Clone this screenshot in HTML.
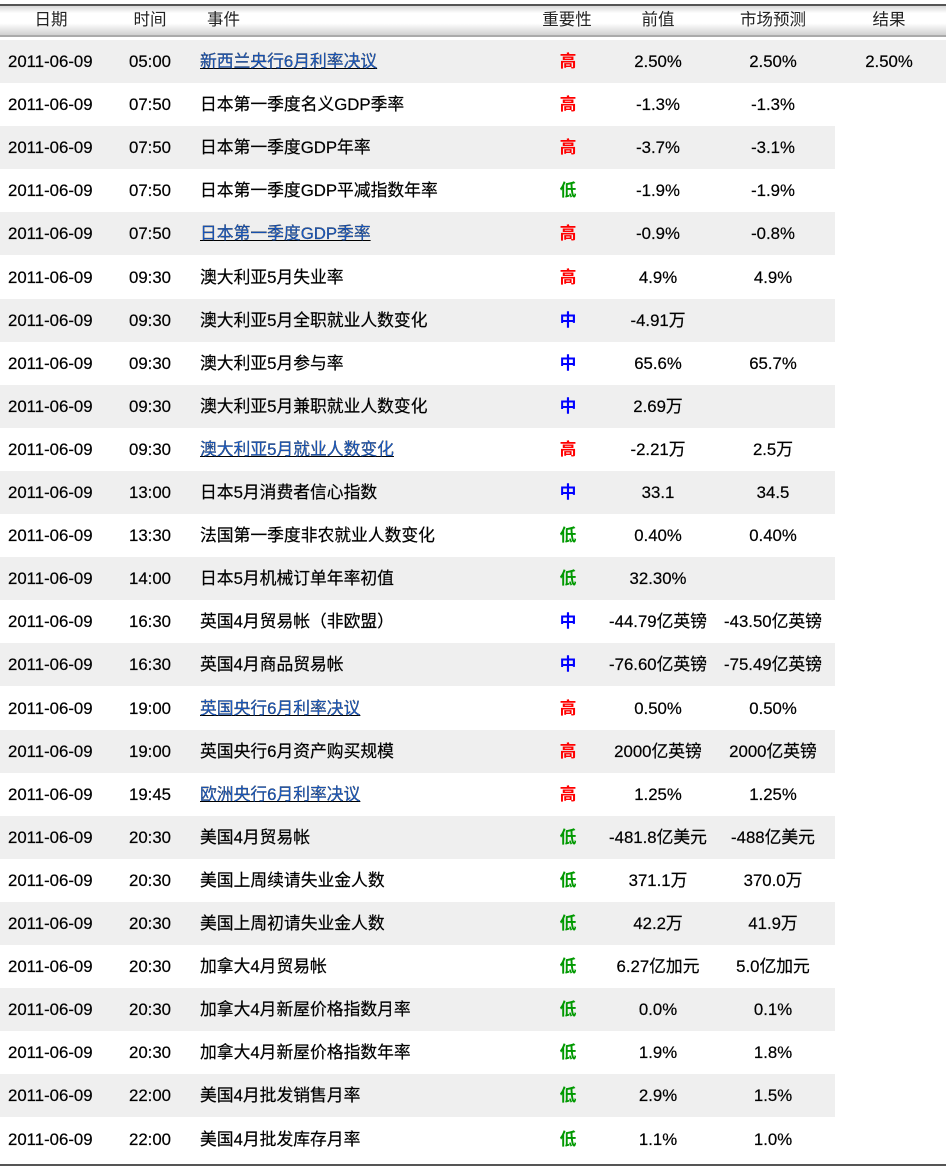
<!DOCTYPE html>
<html><head><meta charset="utf-8"><style>
body{margin:0;width:946px;height:1172px;background:#fff;position:relative;overflow:hidden;font-family:"Liberation Sans","Noto Sans CJK SC",sans-serif;font-size:16.8px;color:#000}
.hd{position:absolute;left:0;top:4px;width:946px;height:33px;border-top:2px solid #555;border-bottom:2px solid #aaa;background:linear-gradient(#d8d8d8,#fff 25%,#fff 60%,#d0d0d0);box-sizing:border-box;font-size:16.5px}
.hd span,.r span{position:absolute;white-space:nowrap}
.hd span{top:0;height:29px;line-height:29px;color:#222}
.r{position:absolute;left:0;height:43px;width:835px}
.r.g{background:#efefef}
.r span{top:0;height:43px;line-height:43px;-webkit-text-stroke:0.2px #000}
.c{transform:translateX(-50%)}
a{color:#1a5cc8;text-decoration:underline}
.r span.H{color:#f00;font-weight:bold;-webkit-text-stroke:0}.r span.M{color:#00f;font-weight:bold;-webkit-text-stroke:0}.r span.L{color:#090;font-weight:bold;-webkit-text-stroke:0}
.bot{position:absolute;left:0;top:1164px;width:946px;height:2px;background:#555}
</style></head><body>
<div class="hd">
<span style="left:51px" class="c">日期</span>
<span style="left:150px" class="c">时间</span>
<span style="left:207px">事件</span>
<span style="left:567px" class="c">重要性</span>
<span style="left:658px" class="c">前值</span>
<span style="left:773px" class="c">市场预测</span>
<span style="left:889px" class="c">结果</span>
</div>
<div id="rows"></div>
<div class="bot"></div>
<script>
var d=[
["05:00","新西兰央行6月利率决议",1,"H","2.50%","2.50%","2.50%"],
["07:50","日本第一季度名义GDP季率",0,"H","-1.3%","-1.3%"],
["07:50","日本第一季度GDP年率",0,"H","-3.7%","-3.1%"],
["07:50","日本第一季度GDP平减指数年率",0,"L","-1.9%","-1.9%"],
["07:50","日本第一季度GDP季率",1,"H","-0.9%","-0.8%"],
["09:30","澳大利亚5月失业率",0,"H","4.9%","4.9%"],
["09:30","澳大利亚5月全职就业人数变化",0,"M","-4.91万",""],
["09:30","澳大利亚5月参与率",0,"M","65.6%","65.7%"],
["09:30","澳大利亚5月兼职就业人数变化",0,"M","2.69万",""],
["09:30","澳大利亚5月就业人数变化",1,"H","-2.21万","2.5万"],
["13:00","日本5月消费者信心指数",0,"M","33.1","34.5"],
["13:30","法国第一季度非农就业人数变化",0,"L","0.40%","0.40%"],
["14:00","日本5月机械订单年率初值",0,"L","32.30%",""],
["16:30","英国4月贸易帐（非欧盟）",0,"M","-44.79亿英镑","-43.50亿英镑"],
["16:30","英国4月商品贸易帐",0,"M","-76.60亿英镑","-75.49亿英镑"],
["19:00","英国央行6月利率决议",1,"H","0.50%","0.50%"],
["19:00","英国央行6月资产购买规模",0,"H","2000亿英镑","2000亿英镑"],
["19:45","欧洲央行6月利率决议",1,"H","1.25%","1.25%"],
["20:30","美国4月贸易帐",0,"L","-481.8亿美元","-488亿美元"],
["20:30","美国上周续请失业金人数",0,"L","371.1万","370.0万"],
["20:30","美国上周初请失业金人数",0,"L","42.2万","41.9万"],
["20:30","加拿大4月贸易帐",0,"L","6.27亿加元","5.0亿加元"],
["20:30","加拿大4月新屋价格指数月率",0,"L","0.0%","0.1%"],
["20:30","加拿大4月新屋价格指数年率",0,"L","1.9%","1.8%"],
["22:00","美国4月批发销售月率",0,"L","2.9%","1.5%"],
["22:00","美国4月批发库存月率",0,"L","1.1%","1.0%"]];
var imp={H:"高",M:"中",L:"低"},h="";
d.forEach(function(r,i){
var top=40+i*43.1;
h+='<div class="r'+(i%2==0?' g':'')+'" style="top:'+top+'px'+(i==0?';width:946px':'')+'">'+
'<span style="left:8px">2011-06-09</span>'+
'<span style="left:150px" class="c">'+r[0]+'</span>'+
'<span style="left:200px">'+(r[2]?'<a>'+r[1]+'</a>':r[1])+'</span>'+
'<span style="left:568px" class="c '+r[3]+'">'+imp[r[3]]+'</span>'+
'<span style="left:658px" class="c">'+r[4]+'</span>'+
'<span style="left:773px" class="c">'+r[5]+'</span>'+
(r[6]?'<span style="left:889px" class="c">'+r[6]+'</span>':'')+'</div>';
});
document.getElementById("rows").innerHTML=h;
</script>
</body></html>
